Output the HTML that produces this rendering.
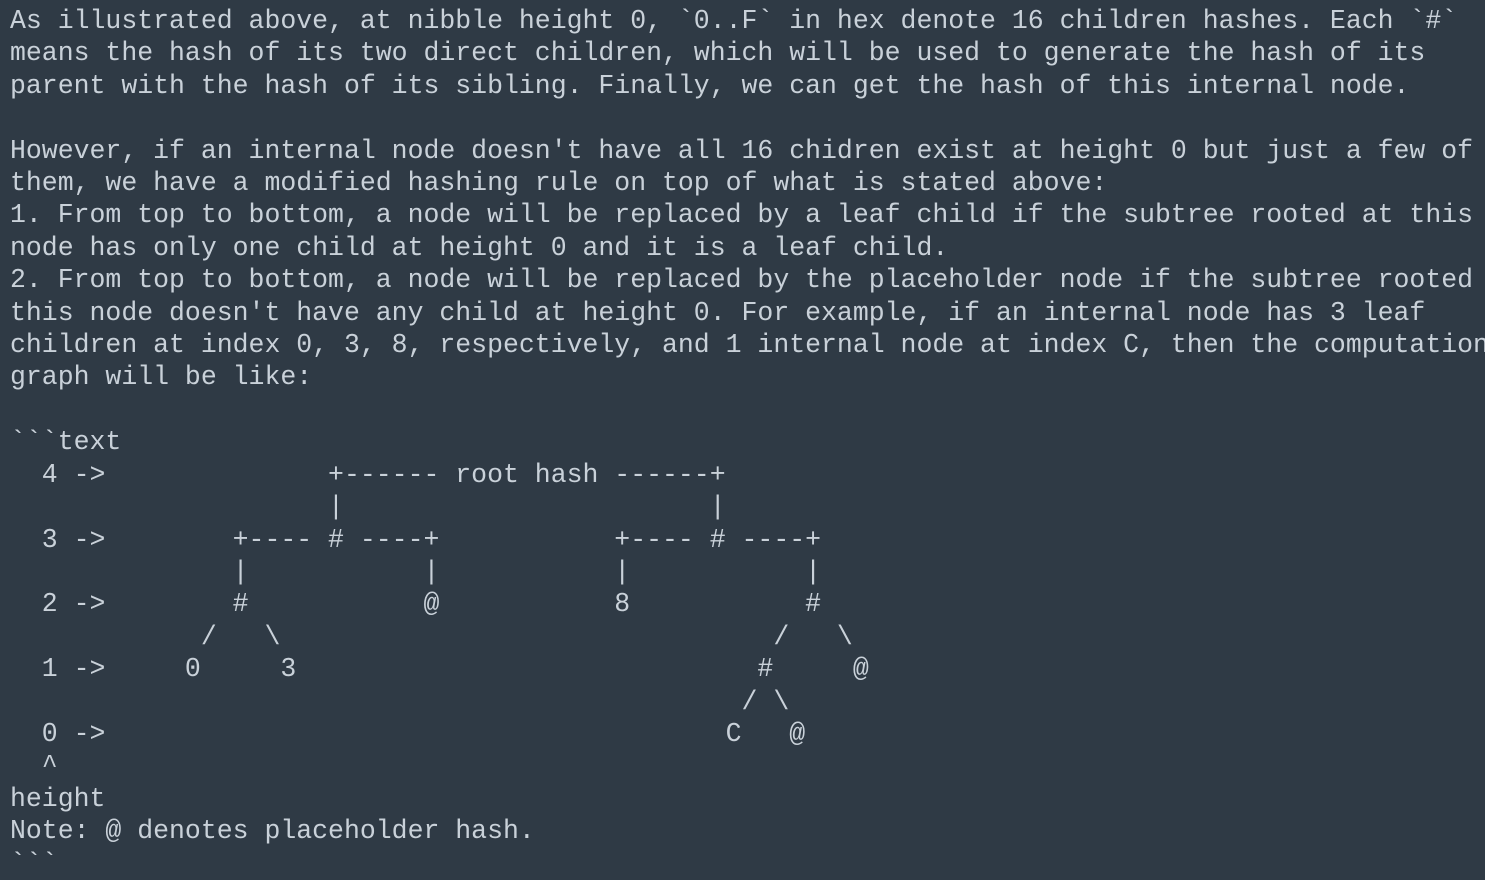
<!DOCTYPE html>
<html><head><meta charset="utf-8"><style>
html,body{margin:0;padding:0;background:#2f3a45;width:1485px;height:860px;overflow:hidden}
pre{margin:0;position:absolute;left:10px;top:5px;font-family:"Liberation Mono",monospace;font-size:26.5px;line-height:32.4px;color:#c9d1d9;white-space:pre}
</style></head><body><pre>As illustrated above, at nibble height 0, &#96;0..F&#96; in hex denote 16 children hashes. Each &#96;#&#96;
means the hash of its two direct children, which will be used to generate the hash of its
parent with the hash of its sibling. Finally, we can get the hash of this internal node.

However, if an internal node doesn't have all 16 chidren exist at height 0 but just a few of
them, we have a modified hashing rule on top of what is stated above:
1. From top to bottom, a node will be replaced by a leaf child if the subtree rooted at this
node has only one child at height 0 and it is a leaf child.
2. From top to bottom, a node will be replaced by the placeholder node if the subtree rooted at
this node doesn't have any child at height 0. For example, if an internal node has 3 leaf
children at index 0, 3, 8, respectively, and 1 internal node at index C, then the computation
graph will be like:

&#96;&#96;&#96;text
  4 -&gt;              +------ root hash ------+
                    |                       |
  3 -&gt;        +---- # ----+           +---- # ----+
              |           |           |           |
  2 -&gt;        #           @           8           #
            /   \                               /   \
  1 -&gt;     0     3                             #     @
                                              / \
  0 -&gt;                                       C   @
  ^
height
Note: @ denotes placeholder hash.
&#96;&#96;&#96;</pre></body></html>
